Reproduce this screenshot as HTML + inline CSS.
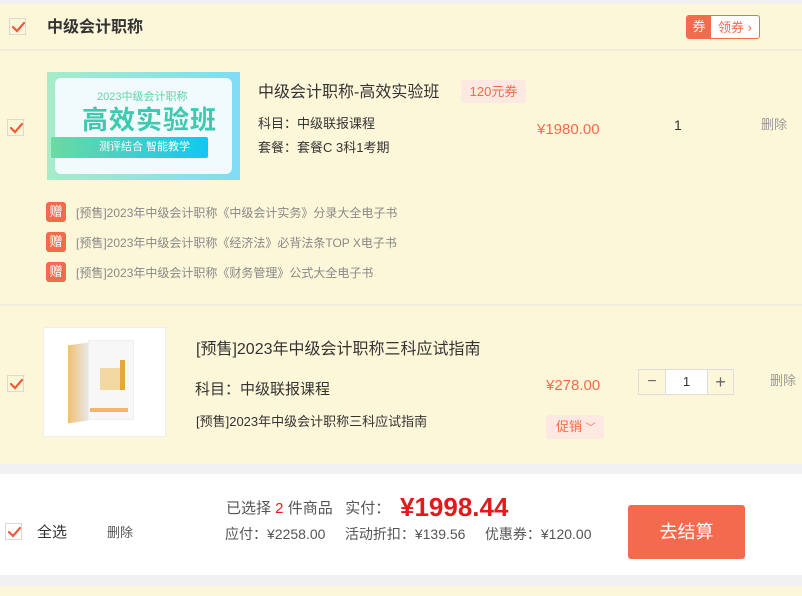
<!DOCTYPE html>
<html><head><meta charset="utf-8"><style>
*{margin:0;padding:0;box-sizing:border-box}
body{width:802px;height:596px;background:#f1f1f3;font-family:"Liberation Sans","Noto Sans CJK SC",sans-serif;position:relative;overflow:hidden;color:#333}
.a{position:absolute}
.cream{background:#fdf7da}
.cb{position:absolute;width:17px;height:17px;border:1px solid #d8d8d8;background:#fdf7da}
.cb svg{position:absolute;left:1px;top:2px}
.t{position:absolute;white-space:nowrap;line-height:1}
.gift{position:absolute;left:46px;width:20px;height:20px;background:#f36b4c;color:#fff;font-size:13px;text-align:center;line-height:20px;border-radius:3px}
.gt{position:absolute;left:76px;font-size:12px;color:#888;line-height:1;white-space:nowrap}
</style></head><body>
<div class="a cream" style="left:0;top:4px;width:802px;height:460px"></div>
<div class="a" style="left:0;top:49px;width:802px;height:2px;background:#f2eedd"></div>
<div class="a" style="left:0;top:304px;width:802px;height:2px;background:#f2eedd"></div>
<div class="a" style="left:0;top:474px;width:802px;height:101px;background:#fff"></div>
<div class="a cream" style="left:0;top:586px;width:802px;height:10px"></div>

<svg width="0" height="0" style="position:absolute"><defs><symbol id="ck" viewBox="0 0 14 12"><path d="M2 6 L6 10 L13 2" stroke="#f05a3c" stroke-width="2.2" fill="none" stroke-linecap="round"/></symbol></defs></svg>

<div class="cb" style="left:9px;top:18px"><svg width="14" height="12"><use href="#ck"/></svg></div>
<div class="t" style="left:47px;top:20px;font-size:16px;font-weight:bold;color:#333">中级会计职称</div>
<div class="a" style="left:686px;top:15px;width:74px;height:24px;border:1px solid #f36b4c;border-radius:3px;background:#fff;overflow:hidden">
 <div class="a" style="left:0;top:0;width:24px;height:22px;background:#f36b4c;color:#fff;font-size:13px;line-height:22px;text-align:center">券</div>
 <div class="t" style="left:31px;top:5px;font-size:13px;color:#f36b4c">领券 ›</div>
</div>

<div class="cb" style="left:7px;top:119px"><svg width="14" height="12"><use href="#ck"/></svg></div>
<div class="a" style="left:47px;top:72px;width:193px;height:108px;background:linear-gradient(90deg,#a6ecc9,#7fdcf3)">
 <div class="a" style="left:8px;top:6px;width:177px;height:96px;background:#f1fafc;border-radius:6px"></div>
 <div class="t" style="left:50px;top:20px;font-size:11px;color:#5fd4a6">2023中级会计职称</div>
 <div class="t" style="left:35px;top:35px;font-size:26px;font-weight:bold;color:#3fc9b0;letter-spacing:1px">高效实验班</div>
 <div class="a" style="left:4px;top:65px;width:157px;height:21px;background:linear-gradient(90deg,#6cdaa2,#14c6f0);border-radius:2px"></div>
 <div class="t" style="left:52px;top:70px;font-size:11px;color:#fff">测评结合 智能教学</div>
</div>
<div class="t" style="left:258px;top:85px;font-size:16px;color:#333">中级会计职称-高效实验班</div>
<div class="a" style="left:461px;top:80px;width:65px;height:23px;background:#fde9e2;border-radius:3px;color:#f36b4c;font-size:13px;line-height:23px;text-align:center">120元券</div>
<div class="t" style="left:258px;top:117px;font-size:13px">科目：中级联报课程</div>
<div class="t" style="left:258px;top:141px;font-size:13px">套餐：套餐C 3科1考期</div>
<div class="t" style="left:537px;top:122px;font-size:15px;color:#f36b4c">¥1980.00</div>
<div class="t" style="left:674px;top:118px;font-size:14px;color:#333">1</div>
<div class="t" style="left:761px;top:118px;font-size:13px;color:#999">删除</div>

<div class="gift" style="top:202px">赠</div><div class="gt" style="top:207px">[预售]2023年中级会计职称《中级会计实务》分录大全电子书</div>
<div class="gift" style="top:232px">赠</div><div class="gt" style="top:237px">[预售]2023年中级会计职称《经济法》必背法条TOP X电子书</div>
<div class="gift" style="top:262px">赠</div><div class="gt" style="top:267px">[预售]2023年中级会计职称《财务管理》公式大全电子书</div>

<div class="cb" style="left:7px;top:375px"><svg width="14" height="12"><use href="#ck"/></svg></div>
<div class="a" style="left:43px;top:327px;width:123px;height:110px;background:#fff;border:1px solid #eee">
 <div class="a" style="left:24px;top:16px;width:20px;height:78px;background:linear-gradient(90deg,#f0c070,#e8e8e8);transform:skewY(-8deg)"></div>
 <div class="a" style="left:44px;top:12px;width:46px;height:80px;background:#f7f7f7;border:1px solid #eee"></div>
 <div class="a" style="left:76px;top:32px;width:5px;height:30px;background:#e6a640"></div>
 <div class="a" style="left:56px;top:40px;width:20px;height:22px;background:#f1d9a0"></div>
 <div class="a" style="left:46px;top:80px;width:38px;height:4px;background:#f0b860"></div>
</div>
<div class="t" style="left:196px;top:342px;font-size:16px">[预售]2023年中级会计职称三科应试指南</div>
<div class="t" style="left:195px;top:382px;font-size:15px">科目：中级联报课程</div>
<div class="t" style="left:196px;top:415px;font-size:13px">[预售]2023年中级会计职称三科应试指南</div>
<div class="t" style="left:546px;top:378px;font-size:15px;color:#f36b4c">¥278.00</div>
<div class="a" style="left:546px;top:415px;width:58px;height:24px;background:#fde9e2;border-radius:3px;color:#f36b4c;font-size:13px;line-height:24px;padding-left:10px">促销 <span style="font-size:10px">﹀</span></div>
<div class="a" style="left:638px;top:369px;width:96px;height:26px;border:1px solid #ddd">
 <div class="a" style="left:0;top:0;width:26px;height:24px;text-align:center;line-height:24px;color:#666;font-size:16px">−</div>
 <div class="a" style="left:26px;top:0;width:43px;height:24px;background:#fff;border-left:1px solid #ddd;border-right:1px solid #ddd;text-align:center;line-height:24px;font-size:13px">1</div>
 <div class="a" style="left:69px;top:0;width:25px;height:24px;text-align:center;line-height:24px;color:#666;font-size:18px">+</div>
</div>
<div class="t" style="left:770px;top:374px;font-size:13px;color:#999">删除</div>

<div class="cb" style="left:5px;top:523px;background:#fff"><svg width="14" height="12"><use href="#ck"/></svg></div>
<div class="t" style="left:37px;top:525px;font-size:15px;color:#333">全选</div>
<div class="t" style="left:107px;top:526px;font-size:13px;color:#555">删除</div>
<div class="t" style="left:226px;top:501px;font-size:15px;color:#555">已选择<span style="color:#e4191c"> 2 </span>件商品&nbsp;&nbsp;&nbsp;实付：</div>
<div class="t" style="left:400px;top:494px;font-size:26px;font-weight:bold;color:#e4191c">¥1998.44</div>
<div class="t" style="left:225px;top:527px;font-size:14px;color:#555">应付：¥2258.00&nbsp;&nbsp;&nbsp;&nbsp;&nbsp;活动折扣：¥139.56&nbsp;&nbsp;&nbsp;&nbsp;&nbsp;优惠券：¥120.00</div>
<div class="a" style="left:628px;top:505px;width:117px;height:54px;background:#f36b4c;border-radius:3px;color:#fff;font-size:18px;line-height:54px;text-align:center">去结算</div>
</body></html>
